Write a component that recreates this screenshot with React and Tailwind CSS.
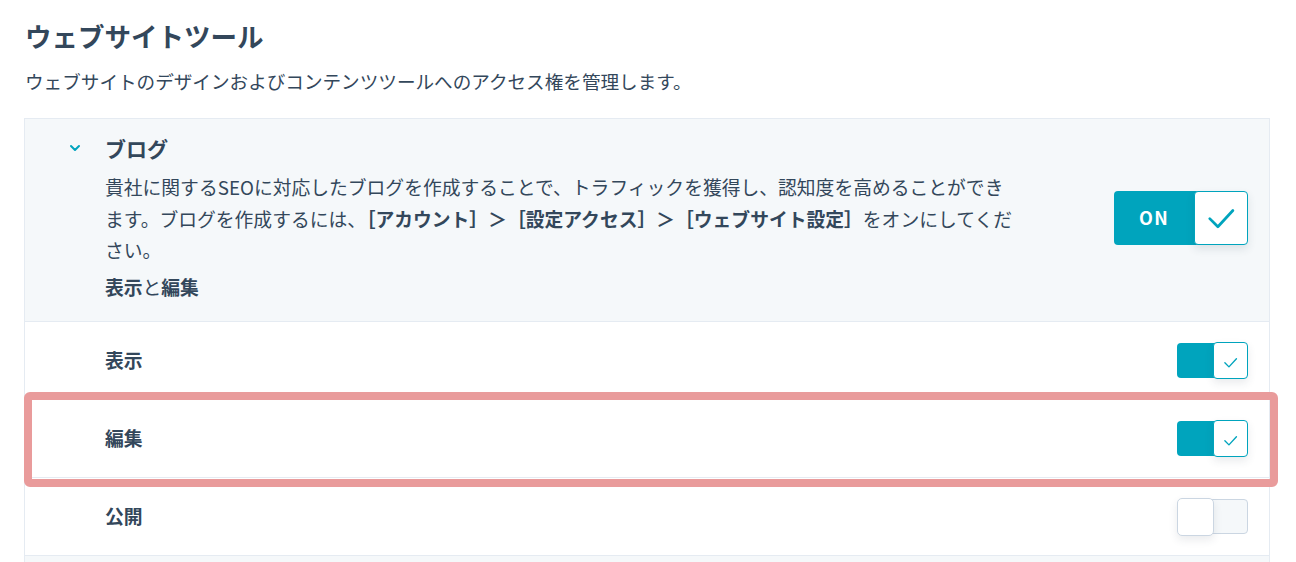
import { ChevronDown } from 'lucide-react'

// Toggle switches used in the permissions panel.
function Check({ size = 14, stroke = 2 }) {
  return (
    <svg width={size} height={size} viewBox="0 0 24 24" fill="none" stroke="#00a4bd" strokeWidth={stroke} strokeLinecap="round" strokeLinejoin="round">
      <path d="M3 12.5l6.5 6.5L21.5 6" />
    </svg>
  )
}

function BigToggle() {
  return (
    <div className="flex h-[54px] w-[134px] shrink-0 items-stretch">
      <div className="flex w-[84px] items-center justify-center rounded-l-[4px] bg-[#00a4bd] pr-[4px] text-[18px] font-bold tracking-[0.08em] text-white">
        ON
      </div>
      <div className="-ml-[4px] flex w-[54px] items-center justify-center rounded-[4px] border border-[#00a4bd] bg-white shadow-[0_4px_8px_rgba(45,62,80,0.12)]">
        <Check size={30} stroke={2.2} />
      </div>
    </div>
  )
}

function SmallToggle({ on }) {
  if (!on) {
    return (
      <div className="flex h-[38px] w-[71px] shrink-0 items-center">
        <div className="z-10 h-[38px] w-[37px] rounded-[5px] border border-[#cbd6e2] bg-white shadow-[0_4px_8px_rgba(45,62,80,0.1)]" />
        <div className="-ml-[3px] h-[35px] w-[37px] rounded-r-[4px] border border-[#cbd6e2] bg-[#f5f8fa]" />
      </div>
    )
  }
  return (
    <div className="flex h-[38px] w-[71px] shrink-0 items-center">
      <div className="h-[35px] w-[39px] rounded-l-[4px] bg-[#00a4bd]" />
      <div className="-ml-[3px] flex h-[37px] w-[35px] items-center justify-center rounded-[4px] border border-[#00a4bd] bg-white pt-[4px] shadow-[0_4px_8px_rgba(45,62,80,0.1)]">
        <Check size={15} stroke={2.2} />
      </div>
    </div>
  )
}

function PermRow({ label, on }) {
  return (
    <div className="flex h-[78px] items-center justify-between border-t border-[#e5ebf2] pl-[80px] pr-[21px]">
      <span className="text-[18.8px] font-semibold">{label}</span>
      <SmallToggle on={on} />
    </div>
  )
}

export default function App() {
  return (
    <div className="min-h-screen bg-white text-[#33475b] [font-family:'Noto_Sans_CJK_JP','Noto_Sans',sans-serif]">
      <div className="relative pl-[24px] pr-[26px] pt-[19px]">
        <h2 className="pl-[1px] text-[26.5px] font-bold leading-[34px]">ウェブサイトツール</h2>
        <p className="mt-[12px] pl-[1px] text-[18.6px] leading-[31px]">
          ウェブサイトのデザインおよびコンテンツツールへのアクセス権を管理します。
        </p>

        <div className="mt-[22px] border border-[#e5ebf2]">
          {/* accordion header */}
          <div className="flex items-center bg-[#f5f8fa] pb-[19px] pl-[42px] pr-[21px] pt-[14px]">
            <div className="flex-1">
              <div className="flex items-center">
                <ChevronDown className="h-[16px] w-[16px] text-[#00a4bd]" strokeWidth={3} />
                <h3 className="ml-[22px] text-[21px] font-bold leading-[30px]">ブログ</h3>
              </div>
              <div className="pl-[38px]">
                <p className="mt-[8px] max-w-[915px] text-[18.8px] leading-[31.5px]">
                  貴社に関するSEOに対応したブログを作成することで、トラフィックを獲得し、認知度を高めることができます。ブログを作成するには、
                  <b className="font-bold">［アカウント］＞［設定アクセス］＞［ウェブサイト設定］</b>
                  をオンにしてください。
                </p>
                <p className="mt-[5px] text-[18.8px] leading-[31.5px]">
                  <b className="font-bold">表示</b>と<b className="font-bold">編集</b>
                </p>
              </div>
            </div>
            <BigToggle />
          </div>

          <PermRow label="表示" on />
          <PermRow label="編集" on />
          <PermRow label="公開" on={false} />
          <div className="h-[40px] border-t border-[#e5ebf2] bg-[#f5f8fa]" />
        </div>

        {/* annotation highlight */}
        <div className="pointer-events-none absolute left-[24px] top-[392px] h-[95px] w-[1254px] rounded-[6px] border-[8px] border-[#e99b9b]" />
      </div>
    </div>
  )
}
